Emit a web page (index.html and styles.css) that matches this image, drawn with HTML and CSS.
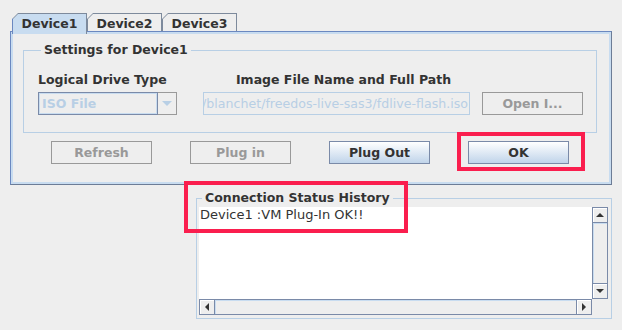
FILE: index.html
```html
<!DOCTYPE html>
<html lang="en">
<head>
  <meta charset="UTF-8" />
  <title>Virtual Media</title>
  <link rel="stylesheet" href="styles.css">
</head>
<body>
  <div class="window">
    <!-- tabs -->
    <div class="tabs">
      <div class="tab selected"><div class="tab-in">Device1</div></div>
      <div class="tab"><div class="tab-in">Device2</div></div>
      <div class="tab"><div class="tab-in">Device3</div></div>
    </div>

    <div class="panel">
      <fieldset class="group settings">
        <legend>Settings for Device1</legend>
        <div class="form">
          <div class="label">Logical Drive Type</div>
          <div class="label center">Image File Name and Full Path</div>
          <div></div>
          <div class="combo">
            <div class="combo-text">ISO File</div>
            <div class="combo-arrow"><span class="tri down light"></span></div>
          </div>
          <div class="field"><span>/blanchet/freedos-live-sas3/fdlive-flash.iso</span></div>
          <button class="btn" disabled>Open I...</button>
        </div>
      </fieldset>
      <div class="actions">
        <button class="btn" disabled>Refresh</button>
        <button class="btn" disabled>Plug in</button>
        <button class="btn">Plug Out</button>
        <button class="btn">OK</button>
      </div>
    </div>

    <fieldset class="group status">
      <legend>Connection Status History</legend>
      <div class="scroll">
        <div class="log">Device1 :VM Plug-In OK!!</div>
        <div class="vbar">
          <div class="sb-btn"><span class="tri up"></span></div>
          <div class="thumb"></div>
          <div class="sb-btn"><span class="tri down"></span></div>
        </div>
        <div class="hbar">
          <div class="sb-btn"><span class="tri left"></span></div>
          <div class="thumb"></div>
          <div class="sb-btn"><span class="tri right"></span></div>
        </div>
        <div class="corner"></div>
      </div>
    </fieldset>

    <!-- highlight marks -->
    <div class="mark mark-ok"></div>
    <div class="mark mark-status"></div>
  </div>
</body>
</html>
```

FILE: styles.css
```css
* {
  box-sizing: border-box;
}
html, body {
  margin: 0;
  height: 100%;
  overflow: hidden;
}
body {
  background: #eeeeee;
  font-family: 'DejaVu Sans', sans-serif;
  font-size: 13px;
  color: #333333;
}
.window {
  position: relative;
  width: 622px;
  height: 330px;
  padding: 13px 0 0 10px;
}

/* tabs */
.tabs {
  display: flex;
  padding-left: 2px;
  height: 18px;
  position: relative;
  z-index: 2;
}
.tab {
  width: 75px;
  height: 18px;
  background: #7d8a9c;
  clip-path: polygon(6px 0, 100% 0, 100% 100%, 0 100%, 0 6px);
  padding: 1px 1px 0 1px;
}
.tab-in {
  height: 100%;
  background: #eeeeee;
  clip-path: polygon(5px 0, 100% 0, 100% 100%, 0 100%, 0 5px);
  font-size: 12.5px;
  font-weight: bold;
  text-align: center;
  line-height: 19px;
}
.tab.selected {
  height: 21px;
  background: linear-gradient(to right, #6b88c0 1px, #7d8a9c 1px);
}
.tab.selected .tab-in {
  background: #c8dcf0;
}

.panel {
  width: 602px;
  height: 154px;
  border: 1px solid #6b88c0;
  border-right-color: #6c7c96;
  border-bottom-color: #6c7c96;
  box-shadow: inset 0 0 0 2px #c8dcf0;
  padding: 11px 14px 0 12px;
}

.group {
  margin: 0;
  border: 1px solid #b8cfe5;
  padding: 0;
  min-width: 0;
}
.group legend {
  font-size: 12.5px;
  font-weight: bold;
  padding: 0 3px;
  margin-left: 3px;
  line-height: 14px;
}
.settings {
  height: 90px;
  padding: 15px 0 0 14px;
}
.form {
  display: grid;
  grid-template-columns: 140px 267px 102px;
  column-gap: 25px;
  row-gap: 5px;
  align-items: end;
}
.form .btn {
  margin-left: -13px;
}
.label {
  font-size: 12.5px;
  font-weight: bold;
  white-space: nowrap;
}
.label.center {
  text-align: center;
  padding-left: 14px;
}

.combo {
  display: flex;
  height: 23px;
}
.combo-text {
  width: 120px;
  border: 1px solid #7a8aa8;
  box-shadow: inset 0 0 0 1px #c8dcf0;
  font-size: 12.5px;
  font-weight: bold;
  color: #b8cfe5;
  line-height: 21px;
  padding-left: 3px;
}
.combo-arrow {
  width: 19px;
  border: 1px solid #9a9a9a;
  border-left: none;
  display: flex;
  align-items: center;
  justify-content: center;
}
.field {
  height: 23px;
  border: 1px solid #b8cfe5;
  display: flex;
  justify-content: flex-end;
  overflow: hidden;
  white-space: nowrap;
  font-size: 12.6px;
  color: #b8cfe5;
  line-height: 21px;
  padding-right: 1px;
}

.btn {
  width: 101px;
  height: 23px;
  font-family: 'DejaVu Sans', sans-serif;
  font-size: 12.5px;
  font-weight: bold;
  color: #333333;
  border: 1px solid #7a8aa8;
  background: linear-gradient(#ffffff, #c0d4ea);
  padding: 0;
}
.btn:disabled {
  color: #999999;
  border-color: #999999;
  background: #eeeeee;
}
.actions {
  display: flex;
  gap: 38px;
  margin: 8px 0 0 28px;
}

/* status */
.status {
  width: 416px;
  height: 128px;
  margin: 6px 0 0 186px;
  padding: 2px 3px 0 2px;
}
.scroll {
  display: grid;
  grid-template-columns: 393px 16px;
  grid-template-rows: 92px 16px;
}
.log {
  background: #ffffff;
  padding: 0 0 0 1px;
  line-height: 15px;
}
.vbar, .hbar {
  display: flex;
  background: #eeeeee;
}
.vbar {
  flex-direction: column;
}
.sb-btn {
  width: 16px;
  height: 16px;
  border: 1px solid #7a8aa8;
  box-shadow: inset 1px 1px 0 #ffffff;
  display: flex;
  align-items: center;
  justify-content: center;
  flex: none;
}
.thumb {
  flex: 1;
  border: 1px solid #7a8aa8;
  box-shadow: inset 1px 1px 0 #c8dcf0;
}
.vbar .thumb {
  border-top: none;
  border-bottom: none;
}
.hbar .thumb {
  border-left: none;
  border-right: none;
}
.corner {
  background: #eeeeee;
}

.tri {
  width: 0;
  height: 0;
  border: 4px solid transparent;
}
.tri.up {
  border-bottom-color: #333333;
  border-top-width: 0;
}
.tri.down {
  border-top-color: #333333;
  border-bottom-width: 0;
}
.tri.down.light {
  border-top-color: #b8cfe5;
  border-width: 5px 5px 0 5px;
}
.tri.left {
  border-right-color: #333333;
  border-left-width: 0;
}
.tri.right {
  border-left-color: #333333;
  border-right-width: 0;
}

.mark {
  position: absolute;
  border: 4px solid #fa1e4e;
}
.mark-ok {
  left: 457px;
  top: 132px;
  width: 128px;
  height: 39px;
}
.mark-status {
  left: 184px;
  top: 181px;
  width: 224px;
  height: 52px;
}
```
